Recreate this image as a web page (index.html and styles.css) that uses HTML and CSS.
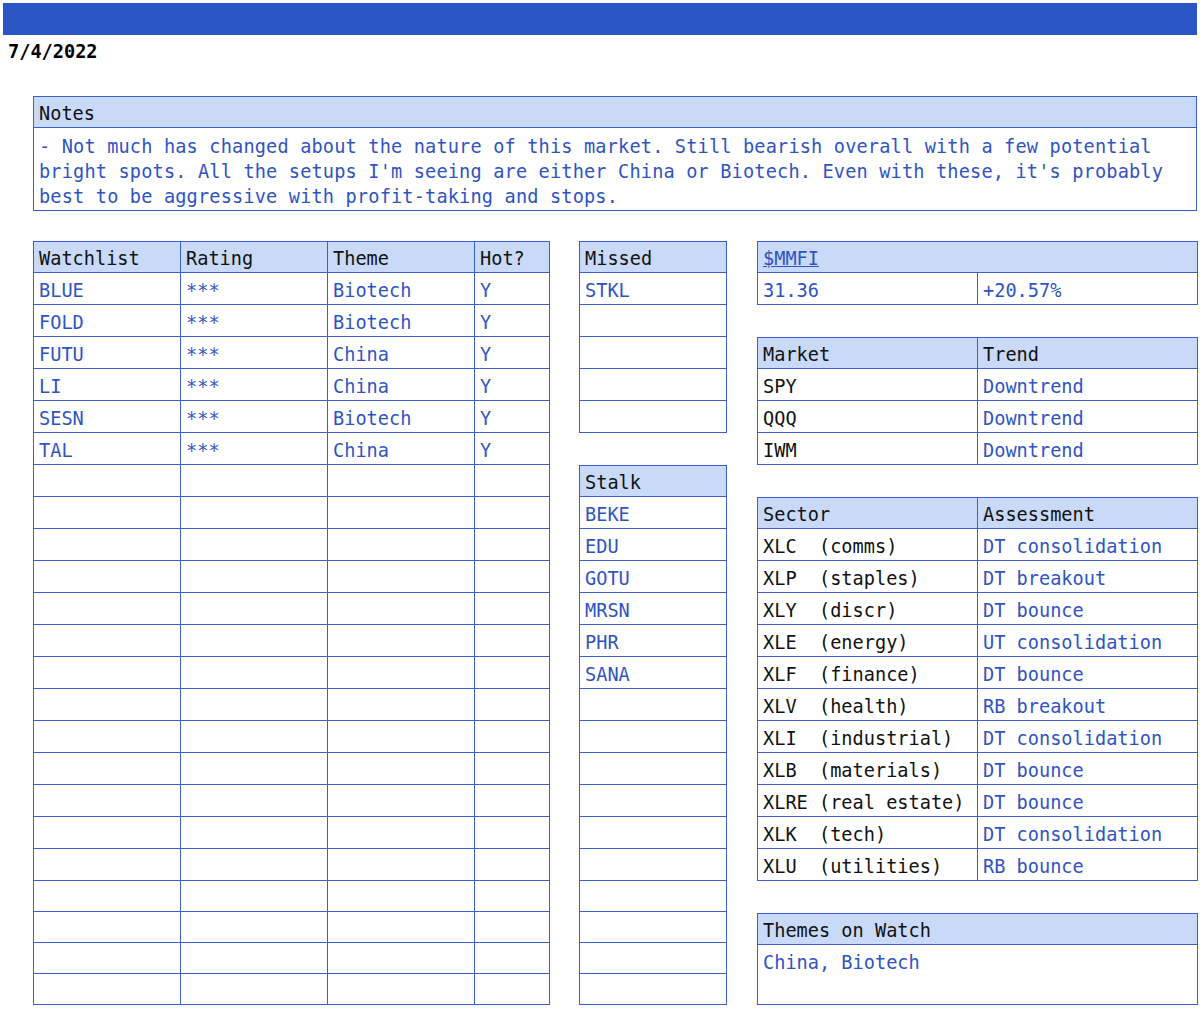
FILE: index.html
```html
<!DOCTYPE html>
<html>
<head>
<meta charset="utf-8">
<link rel="stylesheet" href="styles.css">
</head>
<body>
<div class="topbar"></div>
<div class="date">7/4/2022</div>
<section class="notes">
  <div class="notes-head">Notes</div>
  <div class="notes-body">- Not much has changed about the nature of this market. Still bearish overall with a few potential bright spots. All the setups I'm seeing are either China or Biotech. Even with these, it's probably best to be aggressive with profit-taking and stops.</div>
</section>
<main class="main">
  <div class="tbl watch">
    <div class="c h">Watchlist</div><div class="c h">Rating</div><div class="c h">Theme</div><div class="c h">Hot?</div>
    <div class="c b">BLUE</div><div class="c b">***</div><div class="c b">Biotech</div><div class="c b">Y</div>
    <div class="c b">FOLD</div><div class="c b">***</div><div class="c b">Biotech</div><div class="c b">Y</div>
    <div class="c b">FUTU</div><div class="c b">***</div><div class="c b">China</div><div class="c b">Y</div>
    <div class="c b">LI</div><div class="c b">***</div><div class="c b">China</div><div class="c b">Y</div>
    <div class="c b">SESN</div><div class="c b">***</div><div class="c b">Biotech</div><div class="c b">Y</div>
    <div class="c b">TAL</div><div class="c b">***</div><div class="c b">China</div><div class="c b">Y</div>
    <div class="c"></div><div class="c"></div><div class="c"></div><div class="c"></div>
    <div class="c"></div><div class="c"></div><div class="c"></div><div class="c"></div>
    <div class="c"></div><div class="c"></div><div class="c"></div><div class="c"></div>
    <div class="c"></div><div class="c"></div><div class="c"></div><div class="c"></div>
    <div class="c"></div><div class="c"></div><div class="c"></div><div class="c"></div>
    <div class="c"></div><div class="c"></div><div class="c"></div><div class="c"></div>
    <div class="c"></div><div class="c"></div><div class="c"></div><div class="c"></div>
    <div class="c"></div><div class="c"></div><div class="c"></div><div class="c"></div>
    <div class="c"></div><div class="c"></div><div class="c"></div><div class="c"></div>
    <div class="c"></div><div class="c"></div><div class="c"></div><div class="c"></div>
    <div class="c"></div><div class="c"></div><div class="c"></div><div class="c"></div>
    <div class="c"></div><div class="c"></div><div class="c"></div><div class="c"></div>
    <div class="c"></div><div class="c"></div><div class="c"></div><div class="c"></div>
    <div class="c"></div><div class="c"></div><div class="c"></div><div class="c"></div>
    <div class="c"></div><div class="c"></div><div class="c"></div><div class="c"></div>
    <div class="c"></div><div class="c"></div><div class="c"></div><div class="c"></div>
    <div class="c"></div><div class="c"></div><div class="c"></div><div class="c"></div>
  </div>

  <div class="col mid">
    <div class="tbl single missed">
      <div class="c h">Missed</div>
      <div class="c b">STKL</div>
      <div class="c"></div><div class="c"></div><div class="c"></div><div class="c"></div>
    </div>
    <div class="tbl single stalk">
      <div class="c h">Stalk</div>
      <div class="c b">BEKE</div>
      <div class="c b">EDU</div>
      <div class="c b">GOTU</div>
      <div class="c b">MRSN</div>
      <div class="c b">PHR</div>
      <div class="c b">SANA</div>
      <div class="c"></div><div class="c"></div><div class="c"></div><div class="c"></div><div class="c"></div>
      <div class="c"></div><div class="c"></div><div class="c"></div><div class="c"></div><div class="c"></div>
    </div>
  </div>

  <div class="col right">
    <div class="tbl pair mmfi">
      <div class="c h span"><a class="link" href="#">$MMFI</a></div>
      <div class="c b">31.36</div><div class="c b">+20.57%</div>
    </div>
    <div class="tbl pair market">
      <div class="c h">Market</div><div class="c h">Trend</div>
      <div class="c k">SPY</div><div class="c b">Downtrend</div>
      <div class="c k">QQQ</div><div class="c b">Downtrend</div>
      <div class="c k">IWM</div><div class="c b">Downtrend</div>
    </div>
    <div class="tbl pair sector">
      <div class="c h">Sector</div><div class="c h">Assessment</div>
      <div class="c k">XLC  (comms)</div><div class="c b">DT consolidation</div>
      <div class="c k">XLP  (staples)</div><div class="c b">DT breakout</div>
      <div class="c k">XLY  (discr)</div><div class="c b">DT bounce</div>
      <div class="c k">XLE  (energy)</div><div class="c b">UT consolidation</div>
      <div class="c k">XLF  (finance)</div><div class="c b">DT bounce</div>
      <div class="c k">XLV  (health)</div><div class="c b">RB breakout</div>
      <div class="c k">XLI  (industrial)</div><div class="c b">DT consolidation</div>
      <div class="c k">XLB  (materials)</div><div class="c b">DT bounce</div>
      <div class="c k">XLRE (real estate)</div><div class="c b">DT bounce</div>
      <div class="c k">XLK  (tech)</div><div class="c b">DT consolidation</div>
      <div class="c k">XLU  (utilities)</div><div class="c b">RB bounce</div>
    </div>
    <div class="tbl single themes">
      <div class="c h">Themes on Watch</div>
      <div class="c b top">China, Biotech</div>
    </div>
  </div>
</main>
</body>
</html>
```
FILE: styles.css
```css
html, body {
  margin: 0;
  padding: 0;
  background: #ffffff;
}
body {
  padding: 3px 3px 0 3px;
  font-family: "DejaVu Sans Mono", "Liberation Mono", monospace;
  font-size: 18.6px;
  color: #111111;
}
.topbar {
  height: 32px;
  background: #2a55c5;
}
.date {
  height: 32px;
  line-height: 32px;
  padding: 1px 0 0 5px;
  box-sizing: border-box;
  font-weight: bold;
  color: #000000;
}
.notes {
  margin: 29px 0 0 30px;
  border: 1px solid #3a60cc;
  width: 1164px;
  box-sizing: border-box;
}
.notes-head {
  height: 31px;
  box-sizing: border-box;
  background: #c9daf8;
  border-bottom: 1px solid #3a60cc;
  padding: 2px 5px 0 5px;
  display: flex;
  align-items: center;
}
.notes-body {
  color: #2f54c2;
  padding: 6px 5px 1px 5px;
  line-height: 25px;
  height: 82px;
  box-sizing: border-box;
  letter-spacing: 0.16px;
}
.main {
  display: flex;
  align-items: flex-start;
  margin: 30px 0 0 30px;
  gap: 29px;
}
.col {
  display: flex;
  flex-direction: column;
  gap: 32px;
}
.right {
  margin-left: 1px;
}
.tbl {
  display: grid;
  border-top: 1px solid #3a60cc;
  border-left: 1px solid #3a60cc;
  box-sizing: border-box;
}
.c {
  box-sizing: border-box;
  border-right: 1px solid #3a60cc;
  border-bottom: 1px solid #3a60cc;
  padding: 3px 5px 0 5px;
  display: flex;
  align-items: center;
  white-space: pre;
  overflow: hidden;
}
.h {
  background: #c9daf8;
  color: #111111;
}
.b {
  color: #2f54c2;
}
.k {
  color: #111111;
}
.top {
  align-items: flex-start;
  padding-top: 7px;
}
.span {
  grid-column: 1 / span 2;
}
.link {
  color: #2f54c2;
  text-decoration: underline;
}
.watch {
  width: 517px;
  grid-template-columns: 147px 147px 147px 75px;
  grid-template-rows: 31px repeat(19, 32px) repeat(4, 31px);
}
.single {
  grid-template-columns: 1fr;
}
.mid .tbl {
  width: 148px;
}
.missed {
  grid-template-rows: 31px repeat(5, 32px);
}
.stalk {
  grid-template-rows: 31px repeat(12, 32px) repeat(4, 31px);
}
.right .tbl {
  width: 441px;
}
.pair {
  grid-template-columns: 220px 220px;
}
.mmfi {
  grid-template-rows: 31px 32px;
}
.market {
  grid-template-rows: 31px repeat(3, 32px);
}
.sector {
  grid-template-rows: 31px repeat(11, 32px);
}
.themes {
  grid-template-rows: 31px 60px;
}
```
